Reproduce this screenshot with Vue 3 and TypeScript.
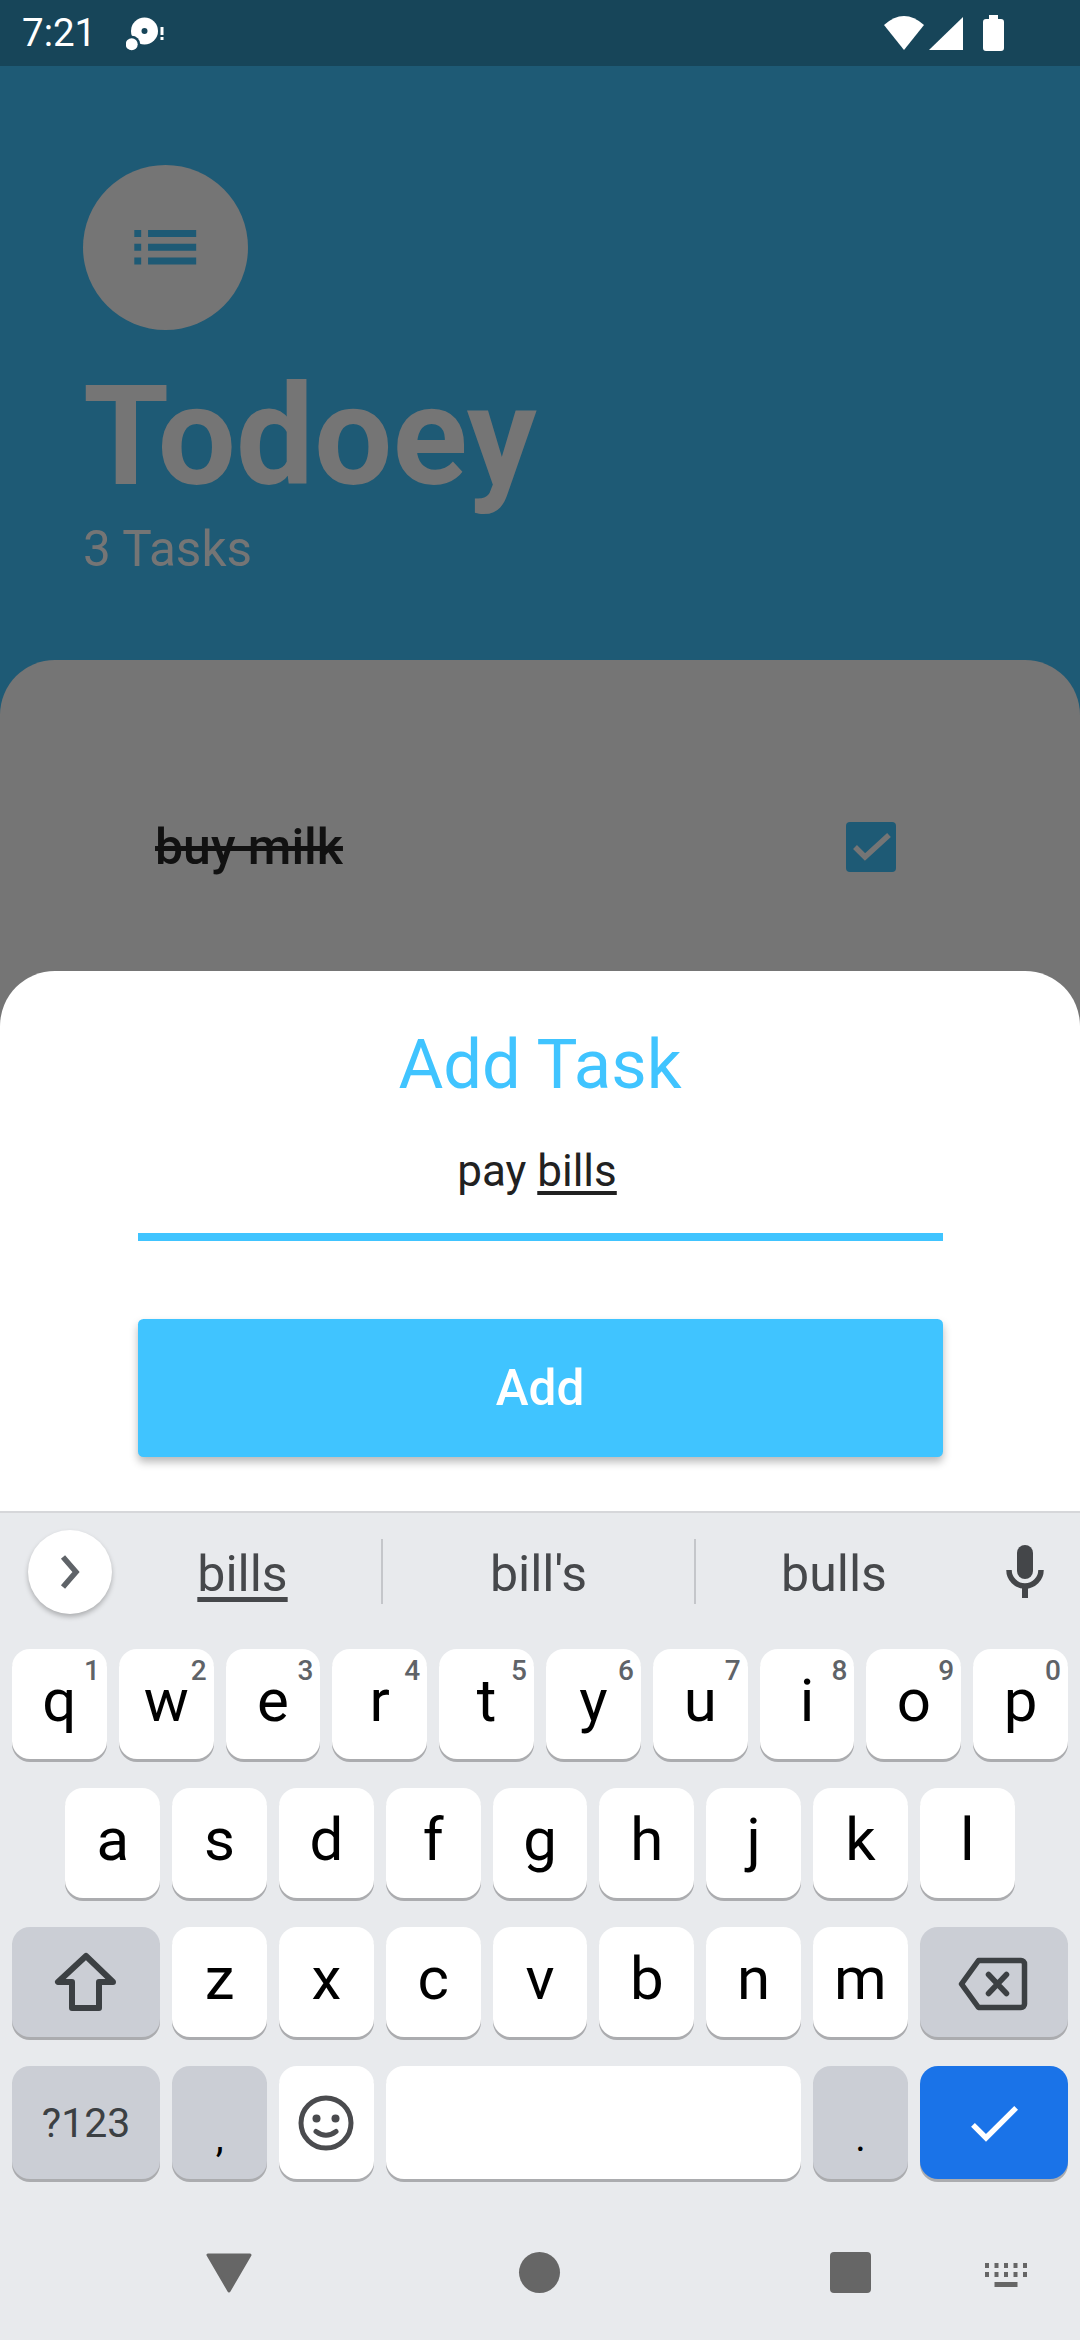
<script setup lang="ts">
interface LetterKey {
  label: string;
  hint?: string;
}

const topRow: LetterKey[] = [
  { label: 'q', hint: '1' },
  { label: 'w', hint: '2' },
  { label: 'e', hint: '3' },
  { label: 'r', hint: '4' },
  { label: 't', hint: '5' },
  { label: 'y', hint: '6' },
  { label: 'u', hint: '7' },
  { label: 'i', hint: '8' },
  { label: 'o', hint: '9' },
  { label: 'p', hint: '0' },
];
const middleRow = ['a', 's', 'd', 'f', 'g', 'h', 'j', 'k', 'l'];
const bottomRow = ['z', 'x', 'c', 'v', 'b', 'n', 'm'];
</script>

<template>
  <div class="screen">
    <header class="status">
      <div class="status-left">
        <span class="time">7:21</span>
        <svg width="40" height="40" viewBox="0 0 40 40">
          <circle cx="18.5" cy="18" r="13.5" fill="#fff" />
          <circle cx="18.5" cy="18" r="3" fill="#174559" />
          <circle cx="5.7" cy="31.3" r="8.5" fill="#174559" />
          <circle cx="5.7" cy="31.3" r="6" fill="#fff" />
          <rect x="34.5" y="14" width="3" height="8" fill="#fff" />
          <rect x="34.5" y="24" width="3" height="3" fill="#fff" />
        </svg>
      </div>
      <div class="status-right">
        <svg width="40" height="34" viewBox="0 0 40 34"><path fill="#fff" d="M0 9Q20 -9 40 9L20 34Z" /></svg>
        <svg width="34" height="34" viewBox="0 0 34 34"><path fill="#fff" d="M0 34H34V1Z" /></svg>
        <svg class="battery" width="21" height="36" viewBox="0 0 21 36"><path fill="#fff" d="M6 0H15V4H18A3 3 0 0 1 21 7V33A3 3 0 0 1 18 36H3A3 3 0 0 1 0 33V7A3 3 0 0 1 3 4H6Z" /></svg>
      </div>
    </header>

    <section class="head">
      <div class="avatar">
        <svg width="82.5" height="82.5" viewBox="0 0 24 24">
          <path fill="#1e5a75" d="M3 13h2v-2H3v2zm0 4h2v-2H3v2zm0-8h2V7H3v2zm4 4h14v-2H7v2zm0 4h14v-2H7v2zM7 7v2h14V7H7z" />
        </svg>
      </div>
      <h1 class="title">Todoey</h1>
      <p class="count">3 Tasks</p>
    </section>

    <section class="tasks">
      <div class="task">
        <span class="task-name">buy milk</span>
        <span class="checkbox">
          <svg width="50" height="50" viewBox="0 0 50 50">
            <path d="M9 25L19 35L43 13" fill="none" stroke="#757575" stroke-width="5.5" />
          </svg>
        </span>
      </div>
    </section>

    <div class="overlay">
      <section class="modal">
        <h2 class="modal-title">Add Task</h2>
        <div class="field">pay <u>bills</u></div>
        <button class="add-btn" type="button">Add</button>
      </section>

      <section class="keyboard">
        <div class="suggest">
          <span class="chev">
            <svg width="30" height="40" viewBox="0 0 30 40">
              <path d="M8 5L21 20L8 35" fill="none" stroke="#5f6368" stroke-width="5.5" />
            </svg>
          </span>
          <span class="word first"><u>bills</u></span>
          <span class="word">bill's</span>
          <span class="word last">bulls</span>
          <svg class="mic" width="60" height="70" viewBox="0 0 60 70">
            <rect x="22" y="10" width="16" height="34" rx="8" fill="#444649" />
            <path d="M14 35a16 16 0 0 0 32 0" fill="none" stroke="#444649" stroke-width="5.5" />
            <rect x="27" y="50" width="6" height="13" fill="#444649" />
          </svg>
        </div>

        <div class="keys">
          <button v-for="key in topRow" :key="key.label" class="key letter" type="button">
            {{ key.label }}<span class="hint">{{ key.hint }}</span>
          </button>

          <button
            v-for="(letter, i) in middleRow"
            :key="letter"
            class="key letter"
            :class="{ 'row-start': i === 0 }"
            type="button"
          >
            {{ letter }}
          </button>

          <button class="key mod wide" type="button">
            <svg width="72" height="72" viewBox="0 0 72 72">
              <path d="M36 10L8 36H22V62H49V36H63Z" fill="none" stroke="#3c4043" stroke-width="6" stroke-linejoin="round" />
            </svg>
          </button>
          <button v-for="letter in bottomRow" :key="letter" class="key letter" type="button">{{ letter }}</button>
          <button class="key mod wide" type="button">
            <svg width="80" height="66" viewBox="0 0 80 66">
              <path d="M7.5 35L24.5 11.5H67A3.5 3.5 0 0 1 70.5 15V55A3.5 3.5 0 0 1 67 58.5H24.5Z" fill="none" stroke="#3c4043" stroke-width="5.5" stroke-linejoin="round" />
              <path d="M34.5 25.5L52.5 44.5M52.5 25.5L34.5 44.5" fill="none" stroke="#3c4043" stroke-width="5.5" stroke-linecap="round" />
            </svg>
          </button>

          <button class="key mod wide sym" type="button">?123</button>
          <button class="key mod punct" type="button">,</button>
          <button class="key" type="button">
            <svg width="60" height="60" viewBox="0 0 60 60">
              <circle cx="30" cy="30" r="25" fill="none" stroke="#4a4b4e" stroke-width="5" />
              <circle cx="20.5" cy="25.5" r="4" fill="#4a4b4e" />
              <circle cx="39.5" cy="25.5" r="4" fill="#4a4b4e" />
              <path d="M20 38.5Q30 46 40 38.5" fill="none" stroke="#4a4b4e" stroke-width="5" stroke-linecap="round" />
            </svg>
          </button>
          <button class="key space" type="button"></button>
          <button class="key mod punct" type="button">.</button>
          <button class="key done wide" type="button">
            <svg width="64" height="64" viewBox="0 0 24 24">
              <path fill="#fff" d="M9 16.17L4.83 12l-1.42 1.41L9 19 21 7l-1.41-1.41z" />
            </svg>
          </button>
        </div>

        <nav class="nav">
          <span class="nav-slot"><svg width="46" height="40" viewBox="0 0 46 40"><path fill="#666" stroke="#666" stroke-width="3" stroke-linejoin="round" d="M2 2H44L23 38Z" /></svg></span>
          <span class="nav-slot"><span class="nav-home"></span></span>
          <span class="nav-slot"><span class="nav-recent"></span></span>
          <svg class="nav-kb" width="42" height="24" viewBox="0 0 42 24">
            <g fill="#666">
              <rect x="0" y="0" width="4" height="5" /><rect x="9.5" y="0" width="4" height="5" /><rect x="19" y="0" width="4" height="5" /><rect x="28.5" y="0" width="4" height="5" /><rect x="38" y="0" width="4" height="5" />
              <rect x="0" y="9" width="4" height="5" /><rect x="9.5" y="9" width="4" height="5" /><rect x="19" y="9" width="4" height="5" /><rect x="28.5" y="9" width="4" height="5" /><rect x="38" y="9" width="4" height="5" />
              <rect x="9.5" y="19" width="23" height="5" />
            </g>
          </svg>
        </nav>
      </section>
    </div>
  </div>
</template>

<style>
body {
  margin: 0;
  background: #e8eaed;
}
</style>

<style scoped>
.screen {
  position: relative;
  width: 1080px;
  height: 2340px;
  overflow: hidden;
  display: flex;
  flex-direction: column;
  background: #1e5a75;
  font-family: Roboto, "Liberation Sans", sans-serif;
}

.status {
  height: 66px;
  flex: none;
  display: flex;
  align-items: center;
  justify-content: space-between;
  padding: 0 76px 0 22px;
  background: #174559;
  color: #fff;
}
.status-left {
  display: flex;
  align-items: center;
  gap: 30px;
}
.time {
  font-size: 38.5px;
  line-height: 66px;
}
.status-right {
  display: flex;
  align-items: center;
  gap: 5px;
}
.battery {
  margin-left: 15px;
}

.head {
  flex: none;
  height: 594px;
  box-sizing: border-box;
  padding: 99px 0 0 83px;
}
.avatar {
  width: 165px;
  height: 165px;
  border-radius: 50%;
  background: #757575;
  display: flex;
  align-items: center;
  justify-content: center;
}
.title {
  margin: 26px 0 0;
  font-size: 139px;
  line-height: 161px;
  font-weight: 700;
  color: #757575;
}
.count {
  margin: 3px 0 0;
  font-size: 49.5px;
  line-height: 58px;
  color: #757575;
}

.tasks {
  flex: 1;
  background: #757575;
  border-radius: 55px 55px 0 0;
  padding: 162px 184px 0 155px;
}
.task {
  display: flex;
  align-items: center;
  justify-content: space-between;
  height: 50px;
}
.task-name {
  font-size: 50px;
  line-height: 52px;
  font-weight: 500;
  color: #111;
  text-decoration: line-through;
}
.checkbox {
  width: 50px;
  height: 50px;
  border-radius: 4px;
  background: #1e5a75;
  display: block;
}
.checkbox svg {
  display: block;
}

.overlay {
  position: absolute;
  left: 0;
  right: 0;
  bottom: 0;
}

.modal {
  background: #fff;
  border-radius: 55px 55px 0 0;
  padding: 52px 137.5px 54px;
}
.modal-title {
  margin: 0;
  font-size: 68.75px;
  line-height: 84px;
  font-weight: 400;
  text-align: center;
  color: #40c4ff;
}
.field {
  margin-top: 38px;
  padding: 0 6px 36px 0;
  border-bottom: 8.25px solid #40c4ff;
  font-size: 44px;
  line-height: 52px;
  text-align: center;
  color: #212121;
}
.field u {
  text-underline-offset: 5px;
}
.add-btn {
  display: block;
  width: 100%;
  height: 138px;
  margin-top: 78px;
  border: 0;
  border-radius: 5.5px;
  background: #40c4ff;
  color: #fff;
  font-family: inherit;
  font-size: 49.5px;
  font-weight: 500;
  box-shadow: 0 5px 8px rgba(0, 0, 0, 0.28);
}

.keyboard {
  background: #e8eaed;
  border-top: 2px solid #d6d7da;
}
.suggest {
  height: 136px;
  display: flex;
  align-items: flex-start;
  padding-left: 28px;
  color: #46484b;
}
.chev {
  flex: none;
  margin-top: 17px;
  width: 84px;
  height: 84px;
  border-radius: 50%;
  background: #fff;
  box-shadow: 0 3px 5px rgba(0, 0, 0, 0.25);
  display: flex;
  align-items: center;
  justify-content: center;
}
.word {
  flex: none;
  margin-top: 26px;
  width: 313px;
  height: 65px;
  box-sizing: border-box;
  border-left: 2.5px solid #c4c6ca;
  text-align: center;
  font-size: 50px;
  line-height: 70px;
}
.word u {
  text-underline-offset: 6px;
}
.word.first {
  width: 269px;
  border-left: 0;
  padding-right: 8px;
}
.word.last {
  width: 278px;
}
.mic {
  flex: none;
  margin: 22px 0 0 23px;
}

.keys {
  display: grid;
  grid-template-columns: repeat(20, 1fr);
  grid-template-rows: 110px 110px 110px 113px;
  column-gap: 12px;
  row-gap: 29px;
  padding: 0 12px;
}
.key {
  grid-column: span 2;
  border: 0;
  padding: 0;
  border-radius: 18px;
  background: #fff;
  box-shadow: 0 3px 0 #abacaf;
  color: #000;
  font-family: inherit;
  display: flex;
  align-items: center;
  justify-content: center;
  position: relative;
}
.letter {
  font-size: 60px;
  line-height: 70px;
  padding-bottom: 6px;
}
.row-start {
  grid-column: 2 / span 2;
}
.hint {
  position: absolute;
  top: 5px;
  right: 7px;
  font-size: 28px;
  line-height: 33px;
  font-weight: 500;
  color: #5f6368;
}
.mod {
  background: #cbced5;
}
.wide {
  grid-column: span 3;
}
.sym {
  font-size: 41px;
  color: #3c4043;
}
.punct {
  font-size: 40px;
  padding-top: 30px;
}
.space {
  grid-column: span 8;
}
.done {
  background: #1a73e8;
}

.nav {
  height: 161px;
  box-sizing: border-box;
  display: flex;
  align-items: center;
  padding: 26px 0 0 73px;
}
.nav-slot {
  width: 311px;
  display: flex;
  justify-content: center;
}
.nav-slot svg {
  display: block;
}
.nav-home {
  width: 41px;
  height: 41px;
  border-radius: 50%;
  background: #666;
}
.nav-recent {
  width: 41px;
  height: 41px;
  border-radius: 4px;
  background: #666;
}
.nav-kb {
  margin-left: -21px;
  margin-top: 4px;
}
</style>
